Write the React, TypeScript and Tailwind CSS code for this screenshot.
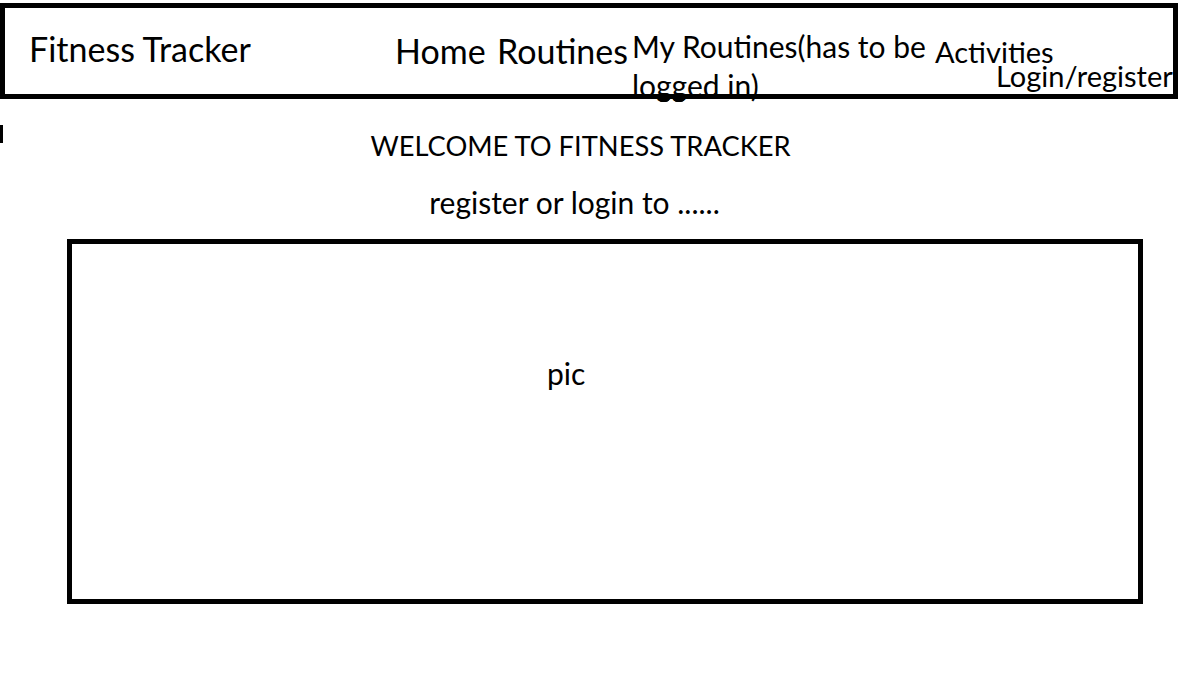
import React from "react";

export default function App() {
  return (
    <div
      className="w-[1199px] h-[694px] bg-white text-black overflow-hidden"
      style={{ fontFamily: "Lato, 'Open Sans', sans-serif" }}
    >
      {/* Header */}
      <div className="relative mt-[3px] flex h-[96px] w-[1178px] items-start border-[5px] border-black">
        <div className="ml-[24px] mt-[24px] w-[366px] shrink-0 whitespace-nowrap text-[34px] leading-none">
          Fitness Tracker
        </div>
        <div className="mt-[26px] w-[102px] shrink-0 whitespace-nowrap text-[34px] leading-none">
          Home
        </div>
        <div className="mt-[26px] w-[135px] shrink-0 whitespace-nowrap text-[34px] leading-none">
          Routines
        </div>
        <div className="mt-[19px] w-[303px] shrink-0 whitespace-nowrap text-[30px] leading-[39px]">
          My Routines(has to be
          <br />
          logged in)
        </div>
        <div className="mt-[29px] flex shrink-0 flex-col">
          <div className="whitespace-nowrap text-[29px] leading-none">Activities</div>
          <div className="ml-[61px] -mt-[5px] whitespace-nowrap text-[29px] leading-none">
            Login/register
          </div>
        </div>
        <span className="absolute left-[653px] top-[85px] h-[9px] w-[12px] rounded-full bg-black" />
        <span className="absolute left-[668px] top-[85px] h-[9px] w-[12px] rounded-full bg-black" />
      </div>

      {/* Welcome */}
      <div className="mt-[26px] flex items-start">
        <div className="h-[18px] w-[3px] shrink-0 bg-black" />
        <div className="mt-[7px] flex w-[1155px] flex-col items-center">
          <div className="whitespace-nowrap text-[27.3px] leading-none">
            WELCOME TO FITNESS TRACKER
          </div>
          <div className="mr-[12px] mt-[28px] whitespace-nowrap text-[30px] leading-none">
            register or login to ......
          </div>
        </div>
      </div>

      {/* Picture box */}
      <div className="ml-[67px] mt-[22px] h-[365px] w-[1076px] border-[5px] border-black">
        <div className="ml-[475px] mt-[114px] text-[30px] leading-none">pic</div>
      </div>
    </div>
  );
}
